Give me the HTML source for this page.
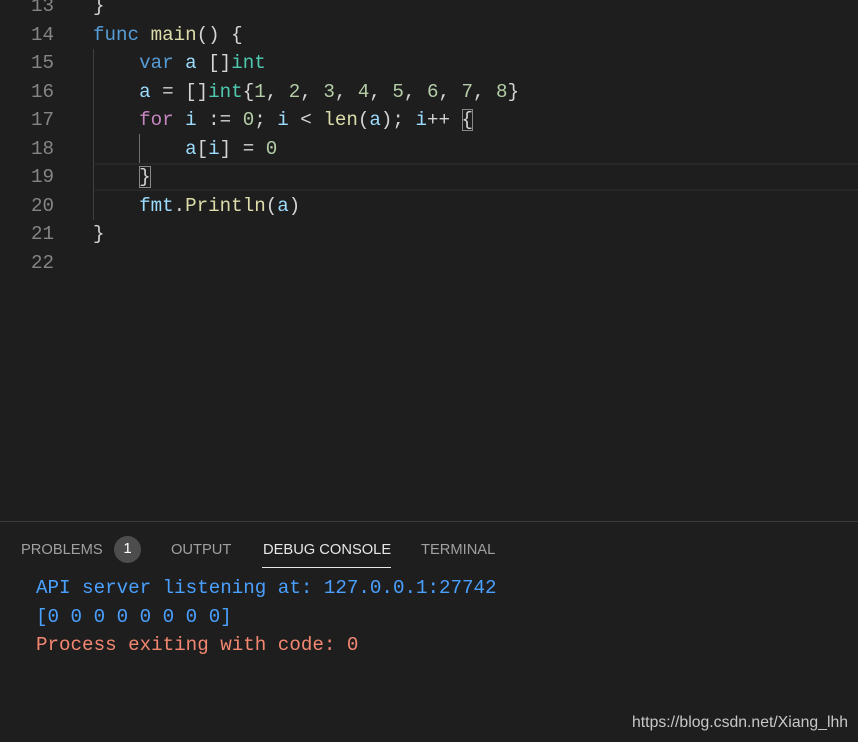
<!DOCTYPE html>
<html><head><style>
body{margin:0;width:858px;height:742px;background:#1e1e1e;overflow:hidden;position:relative;font-family:"Liberation Mono",monospace;}
.ln{position:absolute;left:0;width:54px;text-align:right;color:#858585;font-size:19.2px;line-height:28.5px;}
.cd{position:absolute;left:93px;color:#d4d4d4;font-size:19.2px;line-height:28.5px;white-space:pre;}
.k{color:#569cd6}.f{color:#dcdcaa}.v{color:#9cdcfe}.t{color:#4ec9b0}.n{color:#b5cea8}.c{color:#c586c0}
.br{outline:1px solid #888;outline-offset:-1px}
.tab{position:absolute;top:542px;font-family:"Liberation Sans",sans-serif;font-size:14.7px;color:#a0a0a0;}
.con{position:absolute;left:36px;font-size:19.2px;line-height:28.5px;white-space:pre;}
</style></head><body>
<div style="position:absolute;left:95px;top:163px;width:763px;height:24px;border-top:2px solid #282828;border-bottom:2px solid #282828"></div>
<div style="position:absolute;left:93px;top:49px;width:1px;height:171px;background:#404040"></div>
<div style="position:absolute;left:139px;top:134px;width:1px;height:29px;background:#707070"></div>
<div class="ln" style="top:-8px">13</div><div class="cd" style="top:-8px">}</div>
<div class="ln" style="top:20.5px">14</div><div class="cd" style="top:20.5px"><span class="k">func</span> <span class="f">main</span>() {</div>
<div class="ln" style="top:49px">15</div><div class="cd" style="top:49px">    <span class="k">var</span> <span class="v">a</span> []<span class="t">int</span></div>
<div class="ln" style="top:77.5px">16</div><div class="cd" style="top:77.5px">    <span class="v">a</span> = []<span class="t">int</span>{<span class="n">1</span>, <span class="n">2</span>, <span class="n">3</span>, <span class="n">4</span>, <span class="n">5</span>, <span class="n">6</span>, <span class="n">7</span>, <span class="n">8</span>}</div>
<div class="ln" style="top:106px">17</div><div class="cd" style="top:106px">    <span class="c">for</span> <span class="v">i</span> := <span class="n">0</span>; <span class="v">i</span> &lt; <span class="f">len</span>(<span class="v">a</span>); <span class="v">i</span>++ <span class="br">{</span></div>
<div class="ln" style="top:134.5px">18</div><div class="cd" style="top:134.5px">        <span class="v">a</span>[<span class="v">i</span>] = <span class="n">0</span></div>
<div class="ln" style="top:163px">19</div><div class="cd" style="top:163px">    <span class="br">}</span></div>
<div class="ln" style="top:191.5px">20</div><div class="cd" style="top:191.5px">    <span class="v">fmt</span>.<span class="f">Println</span>(<span class="v">a</span>)</div>
<div class="ln" style="top:220px">21</div><div class="cd" style="top:220px">}</div>
<div class="ln" style="top:248.5px">22</div>
<div style="position:absolute;left:0;top:521px;width:858px;height:1px;background:#3c3c3c"></div>
<div class="tab" style="left:21px">PROBLEMS</div>
<div style="position:absolute;left:114px;top:536px;width:27px;height:27px;border-radius:50%;background:#4d4d4d;color:#fff;font-family:'Liberation Sans',sans-serif;font-size:15px;text-align:center;line-height:26px">1</div>
<div class="tab" style="left:171px">OUTPUT</div>
<div class="tab" style="left:263px;color:#e7e7e7">DEBUG CONSOLE</div>
<div style="position:absolute;left:262px;top:567px;width:129px;height:1px;background:#e7e7e7"></div>
<div class="tab" style="left:421px">TERMINAL</div>
<div class="con" style="top:574px;color:#4aa0ff">API server listening at: 127.0.0.1:27742</div>
<div class="con" style="top:602.5px;color:#4aa0ff">[0 0 0 0 0 0 0 0]</div>
<div class="con" style="top:631px;color:#f48771">Process exiting with code: 0</div>
<div style="position:absolute;left:632px;top:714px;font-family:'Liberation Sans',sans-serif;font-size:15.8px;color:#c8c8c8">https://blog.csdn.net/Xiang_lhh</div>
</body></html>
